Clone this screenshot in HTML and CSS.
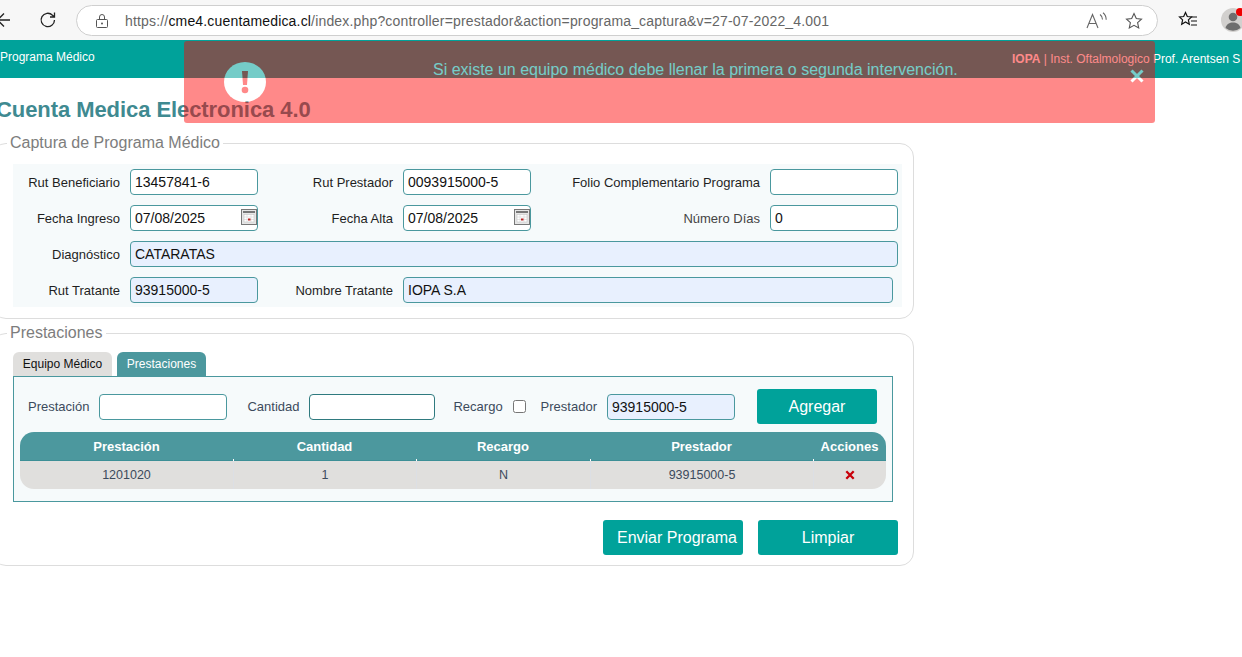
FILE: index.html
```html
<!DOCTYPE html>
<html lang="es">
<head>
<meta charset="utf-8">
<title>Cuenta Medica Electronica 4.0</title>
<link rel="stylesheet" href="styles.css">
</head>
<body>
<header class="browser">
  <svg class="b-back" width="20" height="20" viewBox="0 0 20 20"><path d="M15 10H3M9 3.500L2.500 10 9 16.500" fill="none" stroke="#222" stroke-width="1.300"/></svg>
  <svg class="b-reload" width="20" height="20" viewBox="0 0 20 20"><path d="M16.500 10a6.700 6.700 0 1 1-2-4.800L16.500 7M16.500 2.500V7H12" fill="none" stroke="#222" stroke-width="1.300"/></svg>
  <div class="address">
    <svg class="lock" width="14" height="16" viewBox="0 0 14 16"><path d="M2.500 6.500h9a1 1 0 0 1 1 1v6a1 1 0 0 1-1 1h-9a1 1 0 0 1-1-1v-6a1 1 0 0 1 1-1zM4.500 6.500V4a2.500 2.500 0 0 1 5 0v2.500" fill="none" stroke="#555" stroke-width="1"/><circle cx="7" cy="10.500" r="1" fill="#555"/></svg>
    <span class="url">https://<b>cme4.cuentamedica.cl</b>/index.php?controller=prestador&amp;action=programa_captura&amp;v=27-07-2022_4.001</span>
    <svg class="read" width="22" height="18" viewBox="0 0 22 18"><path d="M1 16 6.500 2.500 12 16M3 11.500h7M14 2.500c1.500 1 2.500 3 2.500 5M17 .800c2 1.500 3.200 4 3.200 7" fill="none" stroke="#666" stroke-width="1.100"/></svg>
    <svg class="star" width="18" height="18" viewBox="0 0 18 18"><path d="M9 1.500l2.300 5 5.200.6-3.900 3.600 1.100 5.300L9 13.300 4.300 16l1.100-5.300L1.500 7.100l5.200-.6z" fill="none" stroke="#555" stroke-width="1.100"/></svg>
  </div>
  <svg class="favs" width="20" height="18" viewBox="0 0 20 18"><path d="M7.500 1.500l1.800 4 4.200.5-3.100 2.900.9 4.300-3.800-2.200-3.800 2.200.9-4.300L1.500 6l4.200-.5z" fill="none" stroke="#111" stroke-width="1.200"/><path d="M13 6h6M13 10h6M13 14h6" stroke="#111" stroke-width="1.200"/></svg>
  <div class="avatar">
    <svg width="24" height="24" viewBox="0 0 24 24"><circle cx="12" cy="12" r="12" fill="#d2d0ce"/><circle cx="12" cy="9" r="4.300" fill="#6e6e6e"/><path d="M4.500 20c1-4 4-5.500 7.500-5.500s6.500 1.500 7.500 5.500a12 12 0 0 1-15 0z" fill="#6e6e6e"/></svg>
    <span class="dot"></span>
  </div>
</header>

<nav class="nav">
  <span class="nav-left">Programa Médico</span>
  <span class="nav-right"><b>IOPA</b> | Inst. Oftalmologico Prof. Arentsen S</span>
</nav>

<main class="page">
  <h1 class="title">Cuenta Medica Electronica 4.0</h1>

  <fieldset class="box">
    <legend class="box-legend">Captura de Programa Médico</legend>
    <div class="capture">
      <label class="lbl">Rut Beneficiario</label>
      <input class="field" value="13457841-6">
      <label class="lbl">Rut Prestador</label>
      <input class="field" value="0093915000-5">
      <label class="lbl">Folio Complementario Programa</label>
      <input class="field" value="">

      <label class="lbl">Fecha Ingreso</label>
      <div class="date"><input class="field" value="07/08/2025"><svg class="cal" width="16" height="18" viewBox="0 0 16 18"><rect x=".5" y="1.500" width="15" height="15" fill="#e6e6e6" stroke="#777"/><rect x="2" y="3" width="12" height="2" fill="#777"/><rect x="3" y="6.500" width="10" height="7.500" fill="#fff" stroke="#bbb" stroke-width=".5"/><path d="M3 9h10M3 11.500h10M6 6.500v7.500M10 6.500v7.500" stroke="#ccc" stroke-width=".5"/><rect x="7" y="10.500" width="2.500" height="2" fill="#b22"/></svg></div>
      <label class="lbl">Fecha Alta</label>
      <div class="date"><input class="field" value="07/08/2025"><svg class="cal" width="16" height="18" viewBox="0 0 16 18"><rect x=".5" y="1.500" width="15" height="15" fill="#e6e6e6" stroke="#777"/><rect x="2" y="3" width="12" height="2" fill="#777"/><rect x="3" y="6.500" width="10" height="7.500" fill="#fff" stroke="#bbb" stroke-width=".5"/><path d="M3 9h10M3 11.500h10M6 6.500v7.500M10 6.500v7.500" stroke="#ccc" stroke-width=".5"/><rect x="7" y="10.500" width="2.500" height="2" fill="#b22"/></svg></div>
      <label class="lbl lbl-soft">Número Días</label>
      <input class="field" value="0">

      <label class="lbl">Diagnóstico</label>
      <input class="field filled span-wide" value="CATARATAS">

      <label class="lbl">Rut Tratante</label>
      <input class="field filled" value="93915000-5">
      <label class="lbl">Nombre Tratante</label>
      <input class="field filled span-name" value="IOPA S.A">
    </div>
  </fieldset>

  <fieldset class="box box-second">
    <legend class="box-legend">Prestaciones</legend>
    <div class="tabs">
      <span class="tab">Equipo Médico</span>
      <span class="tab tab-active">Prestaciones</span>
    </div>
    <section class="tabpanel">
      <div class="addrow">
        <label class="lbl2 l-prest">Prestación</label>
        <input class="field f-prest">
        <label class="lbl2 l-cant">Cantidad</label>
        <input class="field f-cant">
        <label class="lbl2 l-rec">Recargo</label>
        <input class="check" type="checkbox">
        <label class="lbl2 l-pre">Prestador</label>
        <input class="field filled f-pre" value="93915000-5">
        <button class="btn btn-add" type="button">Agregar</button>
      </div>
      <table class="grid">
        <thead>
          <tr><th class="c1">Prestación</th><th class="c2">Cantidad</th><th class="c3">Recargo</th><th class="c4">Prestador</th><th class="c5">Acciones</th></tr>
        </thead>
        <tbody>
          <tr>
            <td>1201020</td><td>1</td><td>N</td><td>93915000-5</td>
            <td><svg class="del" width="10" height="10" viewBox="0 0 10 10"><path d="M1.300 1.300l7.400 7.400M8.700 1.300L1.300 8.700" stroke="#c8000a" stroke-width="2.300"/></svg></td>
          </tr>
        </tbody>
      </table>
    </section>
    <div class="actions">
      <button class="btn btn-send" type="button">Enviar Programa</button>
      <button class="btn" type="button">Limpiar</button>
    </div>
  </fieldset>
</main>

<aside class="toast">
  <svg class="toast-icon" width="42" height="40" viewBox="0 0 42 40"><ellipse cx="21" cy="20" rx="21" ry="20" fill="#fff"/><path d="M18 9h6l-1 14h-4z" fill="#f00"/><circle cx="21" cy="28" r="3.300" fill="#f00"/></svg>
  <p class="toast-text">Si existe un equipo médico debe llenar la primera o segunda intervención.</p>
  <svg class="toast-close" width="14" height="14" viewBox="0 0 14 14"><path d="M1.500 1.500l11 11M12.500 1.500l-11 11" stroke="#fff" stroke-width="3"/></svg>
</aside>
</body>
</html>
```
FILE: styles.css
```css
* { box-sizing: border-box; }
html, body { margin: 0; height: 657px; overflow: hidden; background: #fff; }
body { font-family: "Liberation Sans", Arial, sans-serif; position: relative; }

.browser { height: 40px; background: #f7f7f7; display: flex; align-items: center; overflow: hidden; }
.b-back { margin-left: -5px; flex: none; }
.b-reload { margin-left: 23px; flex: none; }
.address { margin-left: 18px; width: 1082px; height: 31px; flex: none; margin-top: 1px; background: #fff; border: 1px solid #cfcfcf; border-radius: 16px; display: flex; align-items: center; padding-left: 18px; }
.lock { flex: none; }
.url { margin-left: 16px; font-size: 14px; color: #666; white-space: nowrap; width: 963px; flex: none; letter-spacing: .17px; }
.url b { font-weight: 400; color: #111; }
.read { flex: none; margin-left: -2px; }
.star { flex: none; margin-left: 17px; }
.favs { flex: none; margin-left: 20px; }
.avatar { flex: none; margin-left: 23px; position: relative; width: 24px; height: 24px; }
.dot { position: absolute; right: 1px; top: 0; width: 8px; height: 8px; border-radius: 50%; background: #e00; }

.nav { height: 38px; background: #00a29a; color: #fff; font-size: 12px; display: flex; white-space: nowrap; overflow: hidden; }
.nav-left { margin: 10px 0 0 0; flex: none; width: 1012px; }
.nav-right { margin-top: 12px; flex: none; }

.page { margin-left: -8px; width: 922px; }
.title { margin: 19px 0 0 4px; height: 26px; font-size: 22px; line-height: 25px; font-weight: 700; color: #3f8a91; letter-spacing: -.07px; }

.box { margin: 11px 0 0; min-width: 0; border: 1px solid #ddd; border-radius: 14px; padding: 12px 0 0; height: 185px; }
.box-second { height: 242px; margin-top: 5px; padding-top: 10px; }
.box-legend { margin-left: 14px; padding: 0 3px; font-size: 16px; line-height: 18px; color: #7d7d7d; }

.capture { margin-left: 20px; width: 889px; height: 143px; background: #f6fafb; padding: 5px 4px 4px 0; display: grid; grid-template-columns: 107px 128px 125px 128px 219px 128px; grid-auto-rows: 26px; column-gap: 10px; row-gap: 10px; align-items: center; }
.lbl { text-align: right; font-size: 13px; color: #1f1f1f; white-space: nowrap; }
.lbl-soft { color: #444; }
.field { height: 26px; width: 100%; border: 1px solid #4a989e; border-radius: 4px; padding: 0 4px; background: #fff; font: 14px "Liberation Sans", Arial, sans-serif; color: #111; outline: none; }
.filled { background: #e8f0fe; }
.span-wide { grid-column: 2 / 7; }
.span-name { grid-column: 4 / 7; width: 490px; }
.date { position: relative; height: 26px; }
.cal { position: absolute; right: 1px; top: 3px; }

.tabs { display: flex; gap: 5px; height: 24px; margin-left: 20px; }
.tab { width: 99px; height: 24px; background: #e0dfdd; border-radius: 6px 6px 0 0; font-size: 12px; line-height: 24px; text-align: center; color: #111; }
.tab-active { width: 89px; background: #4c989e; color: #fff; }

.tabpanel { margin-left: 20px; width: 880px; height: 126px; border: 1px solid #4a989e; background: #f6fafb; padding: 12px 6px 0; }
.addrow { display: flex; align-items: center; height: 35px; padding-left: 8px; }
.lbl2 { font-size: 13px; color: #3c4a5c; white-space: nowrap; flex: none; }
.f-prest { width: 128px; margin-left: 10px; flex: none; }
.l-cant { margin-left: 20px; }
.f-cant { width: 126px; margin-left: 10px; flex: none; border-color: #2f7a7f; }
.l-rec { margin-left: 18px; }
.check { width: 13px; height: 13px; margin: 0 0 0 10px; flex: none; }
.l-pre { margin-left: 15px; }
.f-pre { width: 128px; margin-left: 10px; flex: none; }
.btn { width: 140px; height: 35px; flex: none; border: 0; border-radius: 3px; background: #00a29a; color: #fff; font: 16px "Liberation Sans", Arial, sans-serif; padding: 0; }
.btn-add { width: 120px; margin-left: 22px; }
.btn-send { padding-left: 8px; white-space: nowrap; }

.grid { margin-top: 8px; width: 866px; table-layout: fixed; border-collapse: separate; border-spacing: 0; font-size: 12.5px; color: #3c4a5c; }
.grid th { position: relative; height: 29px; background: #4c989e; color: #fff; font-size: 13px; font-weight: 700; border-bottom: 1px solid #3d8f96; padding: 0; }
.grid th + th::after { content: ""; position: absolute; left: 0; bottom: -1px; width: 1px; height: 2px; background: #fff; }
.c1 { width: 213px; } .c2 { width: 183px; } .c3 { width: 174px; } .c4 { width: 223px; } .c5 { width: 73px; }
.grid th.c1 { border-top-left-radius: 14px; }
.grid th.c5 { border-top-right-radius: 14px; }
.grid td { height: 28px; background: #e0dfdd; text-align: center; padding: 0; border-left: 1px solid #dcdfe4; }
.grid td:first-child { border-left: 0; border-bottom-left-radius: 14px; }
.grid td:last-child { border-bottom-right-radius: 14px; }
.del { display: inline-block; vertical-align: middle; margin-top: -2px; }

.actions { display: flex; gap: 15px; margin: 18px 0 0 610px; }

.toast { position: absolute; left: 184px; top: 41px; width: 971px; height: 82px; background: #f00; opacity: .46; border-radius: 3px; }
.toast-icon { position: absolute; left: 40px; top: 21px; }
.toast-text { margin: 0; padding: 20px 0 0 249px; font-size: 16px; line-height: 18px; color: #fff; white-space: nowrap; }
.toast-close { position: absolute; left: 946px; top: 28px; }
```
